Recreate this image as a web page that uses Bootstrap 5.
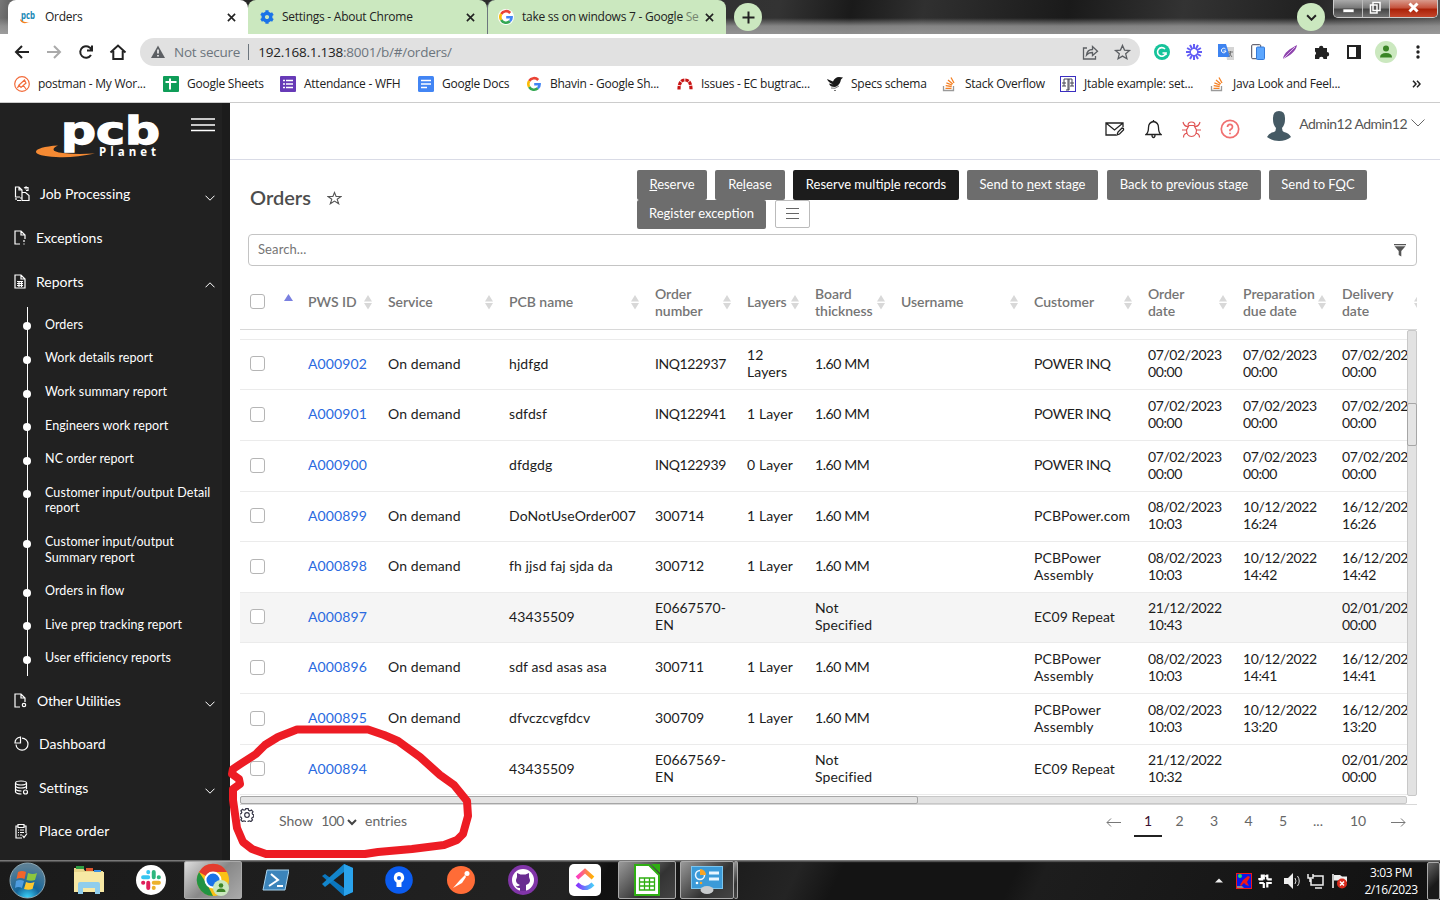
<!DOCTYPE html>
<html lang="en">
<head>
<meta charset="utf-8">
<title>Orders</title>
<link href="https://cdn.jsdelivr.net/npm/bootstrap@5.3.0/dist/css/bootstrap.min.css" rel="stylesheet">
<script src="https://cdn.jsdelivr.net/npm/bootstrap@5.3.0/dist/js/bootstrap.bundle.min.js"></script>
<style>
body{width:1440px;height:900px;overflow:hidden;font-family:Lato,sans-serif;font-size:14px;color:#212121;background:#fff}
svg{display:block;flex:none}
.ui{font-family:"Open Sans",sans-serif;font-size:12px;letter-spacing:-.25px;white-space:nowrap}
/* browser chrome */
.tabstrip{height:34px;background:linear-gradient(100deg,#777 0,#222 50px,#333 54%,#1a1a1a 59%,#303030 64%,#1a1a1a 74%,#333 82%,#222 90%,#555 100%)}
.tabglow{background:linear-gradient(#0000 18px,#999c 26px,#aaac 34px)}
.btab{height:34px;padding:0 12px 0 12px;border-radius:8px 8px 0 0;color:#222}
.green{background:#cbe8bf}
.rnd{width:28px;height:28px;border-radius:50%}
.wctl{width:105px;height:18px;border:1px solid #ccc;border-top:0;border-radius:0 0 5px 5px;background:#555;overflow:hidden;margin-right:2px}
.wctl>div{height:18px;background:linear-gradient(#aaa,#777 45%,#444 50%,#777);border-right:1px solid #bbb}
.wctl>.wx{background:linear-gradient(#d99a8c,#c4503a 45%,#a92108 50%,#c84a30);border:0}
.toolbar{height:36px}
.pill{width:1000px;height:28px;border-radius:14px;background:#e1e1e1;font-size:13.5px;letter-spacing:-.23px}
.tools{display:grid;grid-template-columns:repeat(9,32px);justify-items:center;align-items:center;margin-left:6px}
.marks{height:33px;border-bottom:1px solid #ccc;padding:0 0 5px 14px;display:grid;grid-template-columns:149px 117px 138px 108px 151px 150px 114px 119px 149px 1fr 28px;align-items:center}
.marks>div{display:flex;gap:8px;align-items:center}
/* sidebar */
.side{width:230px;background:#212121;border-right:8px solid #1c1c1c;color:#fff;overflow:hidden}
.brandrow{height:69.5px;padding:9px 6px 0 36px}
.mi{height:43.8px;padding:0 7px 1px 14px;letter-spacing:-.02px;white-space:nowrap}
.mi .chev{margin-top:8px}
.sub~.mi{height:43.6px}
.sub{margin:3px 0 3px 27px;border-left:1px solid #fff;font-size:12.5px;letter-spacing:.09px;line-height:15.6px;height:369px}
.sub div{padding:10px 0 8px 17px;position:relative}
.sub div::before{content:"";position:absolute;left:-5px;top:15.5px;width:8px;height:8px;border-radius:50%;background:#fff}
/* page */
.tophead{height:57px;border-bottom:1px solid #d9dbe6}
.adm{letter-spacing:-.5px;margin-top:10px;color:#555}
.ttl{font-size:20px;font-weight:600;color:#4d4d4d}
.acts{width:780px;column-gap:8px;row-gap:0}
.acts .btn{height:29.5px;padding:0 4px 1px;font-size:13px;line-height:27px;border:0;border-radius:2px;background:#6d6d6d;color:#fff;white-space:nowrap}
.acts .btn.dark{background:#1c1c1c}
.acts .menu{background:#fff;border:1px solid #bbb;width:35px;height:28px;margin:0 0 0 1px}
.b70{width:70px}.b166{width:166px}.b131{width:131px}.b154{width:154px;margin-left:1px}.b98{width:98px}.b129{width:129px}
.srch{height:32px;border:1px solid #c4c4c4;border-radius:4px;font-size:13px;letter-spacing:.1px;color:#757575;padding:0 10px 0 9px}
.grid{table-layout:fixed;width:1190px;border-collapse:separate;border-spacing:0;line-height:17px;margin:0}
.grid td,.grid th{padding:0 0 0 8px;vertical-align:middle}
.grid td{border-bottom:1px solid #ebebeb;height:51px;padding-bottom:3px;letter-spacing:.1px;color:#1c1c1c}
.grid .num{letter-spacing:-.4px}
.grid tbody tr:nth-child(1) td,.grid tbody tr:nth-child(4) td,.grid tbody tr:nth-child(6) td,.grid tbody tr:nth-child(9) td{height:50px}
.grid th{height:64px;border-bottom:1px solid #d8d8d8;color:#757575;font-weight:600;letter-spacing:-.04px}
.grid tr.on td{background:#f5f5f5}
.grid a{color:#2a6ae0;text-decoration:none}
.cb{width:15px;height:15px;border:1px solid #b5b5b5;border-radius:3px;background:#fff;margin-left:2px}
td .cb{margin-top:1px}
.track{background:#e2e2e2;border:1px solid #c8c8c8;border-radius:2px}
.thumb{border:1px solid #a6a6a6;border-radius:2px;background:#e4e4e4}
.vtrack{width:10px;height:466px;padding-top:72px}
.vtrack .thumb{height:43px;margin:0 -1px}
.htrack{width:1167px;height:8px}
.htrack .thumb{height:8px;width:678px;margin:-1px}
.foot{border-top:1px solid #d8d8d8;height:56px;color:#666}
.foot>span{margin-top:5px}
.pg{display:grid;grid-template-columns:28px 28px 35px 34px 35px 34px 36px 44px 36px;text-align:center;padding-top:7px;width:310px;margin-right:1px}
.pg span{height:25px;line-height:17px}
.pg .cur{border-bottom:2px solid #212121;color:#3a1030}
/* taskbar */
.task{height:40px;background:linear-gradient(#777 1px,#2a2a2a 2px,#0000 3px),linear-gradient(115deg,#1a1a1a 0,#222 40%,#101010 42%,#242424 55%,#141414 58%,#141414 70%,#1d1d1d 72%,#111);color:#fff}
.task>.t{width:62px;display:flex;justify-content:center}
.tbox{height:38px;border:1px solid #aaa;border-radius:2px;background:linear-gradient(135deg,#999,#333 60%,#444);display:flex;align-items:center;justify-content:center}
.scrib{position:absolute;left:0;top:700px;pointer-events:none}
</style>
</head>
<body class="d-flex flex-column">
<svg width="0" height="0" class="position-absolute">
<symbol id="g" viewBox="0 0 16 16"><g fill="none" stroke-width="2.6"><path d="M12.2 4A5.6 5.6 0 0 0 3.2 5" stroke="#ea4335"/><path d="M3.2 5a5.8 5.8 0 0 0 0 6" stroke="#fbbc05"/><path d="M3.2 11a5.6 5.6 0 0 0 8.6 1.3" stroke="#34a853"/><path d="M11.8 12.3A5.4 5.4 0 0 0 13.6 8.2H8.2" stroke="#4285f4"/></g></symbol>
<symbol id="x" viewBox="0 0 10 10"><path d="M1 1l8 8M9 1L1 9" stroke="#222" stroke-width="1.8"/></symbol>
<symbol id="dn" viewBox="0 0 10 6"><path d="M.5.7L5 5.2 9.5.7" fill="none" stroke="currentColor"/></symbol>
<symbol id="so" viewBox="0 0 16 16"><path d="M2.5 10v4.5h10V10" fill="none" stroke="#9a9a9a" stroke-width="1.3"/><path d="M4.5 12.3h6M4.7 9.7l6 .8M5.4 6.8l5.6 2.2M7 4l4.7 4M10 1.5l3 5.5" stroke="#f48024" stroke-width="1.3"/></symbol>
<symbol id="slack" viewBox="0 0 20 20"><g stroke-width="3.6" stroke-linecap="round"><path d="M7.5 2.8v.2M2.8 7.5h4.700" stroke="#36c5f0"/><path d="M12.5 2.8v4.7M17 7.500h.2" stroke="#2eb67d"/><path d="M2.8 12.5h.2M7.5 12.5v4.7" stroke="#e01e5a"/><path d="M12.5 12.5h4.7M12.5 17v.2" stroke="#ecb22e"/></g></symbol>
</svg>

<div class="tabstrip"><div class="tabglow d-flex h-100 ps-2">
 <div class="btab ui bg-white d-flex align-items-center" style="width:240px"><svg width="17" height="18"><text x="1" y="11" font-family="Open Sans" font-weight="700" font-size="10" textLength="14" lengthAdjust="spacingAndGlyphs" fill="#1787b5" letter-spacing="0">pcb</text><path d="M0 12q2 5 10 2q-7 1-9-3z" fill="#f58220"/></svg><span class="ms-2 flex-grow-1" style="margin-left:7px">Orders</span><svg width="9" height="9"><use href="#x"/></svg></div>
 <div class="btab ui green d-flex align-items-center" style="width:239px"><svg width="14" height="14" viewBox="-7 -7 14 14"><circle r="3.8" fill="none" stroke="#1a73e8" stroke-width="3.4"/><path d="M0-6.8V-4M0 6.8V4M-5.9-3.4L-3.5-2M5.9 3.4L3.5 2M-5.900 3.4L-3.5 2M5.9-3.4L3.5-2" stroke="#1a73e8" stroke-width="3.2"/></svg><span class="ms-2 flex-grow-1">Settings - About Chrome</span><svg width="9" height="9"><use href="#x"/></svg></div>
 <div class="btab ui green d-flex align-items-center border-start border-secondary" style="width:239px;padding-left:10px"><span class="bg-white rounded-circle"><svg width="16" height="16"><use href="#g"/></svg></span><span class="ms-2 flex-grow-1">take ss on windows 7 - Google <span class="opacity-50">Se</span></span><svg width="9" height="9"><use href="#x"/></svg></div>
 <div class="rnd green ms-2 d-flex align-items-center justify-content-center" style="margin-top:3px"><svg width="13" height="13"><path d="M6.5.5v12M.5 6.5h12" stroke="#222" stroke-width="2"/></svg></div>
 <div class="rnd green ms-auto d-flex align-items-center justify-content-center" style="margin-top:3px"><svg width="11" height="7" viewBox="0 0 10 6"><path d="M1 1l4 4 4-4" fill="none" stroke="#222" stroke-width="1.8"/></svg></div>
 <div class="wctl d-flex ms-2"><div style="width:29px"><svg width="28" height="17"><rect x="9" y="9" width="11" height="3.5" fill="#fff" stroke="#555" stroke-width=".7"/></svg></div><div style="width:27px"><svg width="26" height="17"><path d="M10 2.5h7v8h-7zM7.5 5h6.5v8H7.5z" fill="#555" stroke="#fff" stroke-width="1.5"/></svg></div><div class="wx flex-grow-1"><svg width="47" height="17"><path d="M19.5 3.500l8 8M27.5 3.5l-8 8" stroke="#fff" stroke-width="3"/></svg></div></div>
</div></div>

<div class="toolbar d-flex align-items-center flex-shrink-0">
 <svg width="140" height="28" fill="none" stroke="#222" stroke-width="2"><path d="M29 14H16M22 8l-6 6 6 6"/><path d="M47 14h13M54 8l6 6-6 6" stroke="#aaa"/><path d="M91.5 12A5.8 5.8 0 1 0 91 17M92 7.5v5h-5"/><path d="M110.500 14.5L118 7.5l7.5 7M113.3 13v8h9.4v-8"/></svg>
 <div class="pill ui d-flex align-items-center px-2"><svg width="20" height="16"><path d="M10 1.5L17 14H3z" fill="#5c5f63"/><path d="M10 5.5v4M10 11v1.500" stroke="#fff" stroke-width="1.5"/></svg><span class="text-secondary" style="margin-left:6px">Not secure</span><span class="border-start border-secondary" style="height:16px;margin:0 9px 0 8px"></span><span>192.168.1.138<span class="text-secondary">:8001/b/#/orders/</span></span>
 <svg class="ms-auto" width="50" height="18" fill="none" stroke="#5c5f63" stroke-width="1.3"><path d="M5 5H1.5v11h12v-3M4.500 12c.5-4 3.5-5.5 6-5.5V3.5l5 4.7-5 4.3V9.500c-2.5 0-4.5.5-6 2.500z"/><path d="M40.500 2.500l2 4.600 5 .4-3.800 3.300 1.200 4.900-4.400-2.600-4.400 2.600 1.200-4.900-3.800-3.300 5-.4z"/></svg></div>
 <div class="tools">
 <svg width="16" height="16"><circle cx="8" cy="8" r="8" fill="#15c39a"/><path d="M11 5a4.300 4.300 0 1 0 1 4H8.500M12 11V9" fill="none" stroke="#fff" stroke-width="1.600"/></svg>
 <svg width="16" height="16" viewBox="-8 -8 16 16" stroke="#625df5" stroke-width="2"><path d="M0-8v5M0 8V3M-8 0h5M8 0H3M-4-6.900l2.500 4.300M4 6.900L1.500 2.600M4-6.900L1.500-2.600M-4 6.900l2.500-4.300M-6.900-4l4.300 2.500M6.900 4L2.600 1.500M6.900-4L2.600-1.500M-6.900 4l4.300-2.500"/></svg>
 <svg width="16" height="16"><path d="M7 3h9v13H9z" fill="#d5d5d5"/><path d="M0 0h8l4 13H0z" fill="#3d83f0"/><path d="M7.500 5a2.300 2.300 0 1 0 .5 2H5.500" fill="none" stroke="#fff"/><path d="M10 8h5M12.500 7v2c0 2-1 3-2 4M11 9l3 4" stroke="#777" fill="none"/></svg>
 <svg width="14" height="16"><rect x=".7" y=".7" width="9" height="14" rx="1" fill="#fff" stroke="#445"/><rect x="5.500" y="3" width="8" height="12.500" rx="1" fill="#5ca7ff" stroke="#347bdb"/></svg>
 <svg width="16" height="16"><path d="M1 15C2 8 8 5 15 1c-1 6-6 10-14 14z" fill="#8e44ad"/><path d="M1 15L13 3" stroke="#d9b3ea"/></svg>
 <svg width="16" height="16"><path d="M1 4h4a2.200 2.200 0 1 1 4.400 0H13v4a2.200 2.200 0 1 1 0 4.400V15H9.500a2.200 2.200 0 0 0-4.400 0H1v-4a2 2 0 0 0 0-3.500z" fill="#222"/></svg>
 <svg width="14" height="14"><path d="M1 1h12v12H1z" fill="#fff" stroke="#222" stroke-width="2"/><path d="M9 1h4v12H9z" fill="#222"/></svg>
 <svg width="22" height="22"><circle cx="11" cy="11" r="11" fill="#cbe8bf"/><circle cx="11" cy="7.500" r="3" fill="#3b8527"/><path d="M5 16.500q0-4.500 6-4.500t6 4.500z" fill="#3b8527"/></svg>
 <svg width="4" height="14" fill="#222"><circle cx="2" cy="2" r="1.700"/><circle cx="2" cy="7" r="1.700"/><circle cx="2" cy="12" r="1.700"/></svg>
 </div>
</div>
<div class="marks ui flex-shrink-0">
 <div><svg width="16" height="16" fill="none" stroke="#f26b3a" stroke-width="1.200"><circle cx="8" cy="8" r="7.300"/><path d="M10.500 4L5 9l2 2.500 5-4.500zM9 9l3 4M5 9l-1.500 3"/></svg>postman - My Wor...</div>
 <div><svg width="16" height="16"><rect width="16" height="16" rx="1" fill="#0f9d58"/><path d="M2.500 6h11M7 2.500v11" stroke="#fff" stroke-width="2"/></svg>Google Sheets</div>
 <div><svg width="16" height="16"><rect width="16" height="16" rx="1" fill="#673ab7"/><path d="M3 4.500h2M6 4.500h7M3 8h2M6 8h7M3 11.500h2M6 11.500h7" stroke="#fff" stroke-width="1.700"/></svg>Attendance - WFH</div>
 <div><svg width="16" height="16"><rect width="16" height="16" rx="1.500" fill="#4285f4"/><path d="M3 4.500h10M3 8h10M3 11.500h6" stroke="#fff" stroke-width="1.700"/></svg>Google Docs</div>
 <div><svg width="16" height="16"><use href="#g"/></svg>Bhavin - Google Sh...</div>
 <div><svg width="16" height="16"><path d="M2 13.500q0-9.500 6-9.500t6 9.500" fill="none" stroke="#c81414" stroke-width="3.200" stroke-dasharray="3.500 .8"/></svg>Issues - EC bugtrac...</div>
 <div><svg width="16" height="16"><path d="M0 3l6 2.500Q8 1 12 1l4 .5-2 2q-1 6-6 7.500-5 0-6-3.500l4 1Q1 6 0 3z" fill="#181818"/><path d="M4 12q4 1.500 8-2M7 14.500h2" stroke="#777" fill="none"/></svg>Specs schema</div>
 <div><svg width="16" height="16"><use href="#so"/></svg>Stack Overflow</div>
 <div><svg width="16" height="16" fill="none" stroke="#1b1b6b"><rect x=".5" y=".5" width="15" height="15" stroke="#3a2ec0"/><path d="M4 3h8M8 3v11M9 3v11M4 3v7M12 3v7M2 7h4M10 7h4M2 10h4M10 10h4M6 14h3" stroke="#445"/></svg>Jtable example: set...</div>
 <div><svg width="16" height="16"><use href="#so"/></svg>Java Look and Feel...</div>
 <svg width="9" height="8" fill="none" stroke="#222" stroke-width="1.500"><path d="M1 .7L4 4 1 7.300M5 .7L8 4 5 7.300"/></svg>
</div>

<div class="d-flex flex-grow-1 overflow-hidden">
 <nav class="side flex-shrink-0">
  <div class="brandrow d-flex">
   <svg width="126" height="48"><text x="25" y="31.500" fill="#fff" stroke="#fff" stroke-width="1.300" font-family="DejaVu Sans" font-weight="700" font-size="37" textLength="99" lengthAdjust="spacingAndGlyphs">pcb</text><path d="M22 33.500C-6 35-8 44 20 45q18 1 39-3.500-20 1-32-.5-16-2-5-7.500z" fill="#f58a33"/><text x="63" y="43.500" fill="#fff" font-family="Open Sans" font-weight="700" font-size="11.500" textLength="57">Planet</text></svg>
   <svg class="ms-auto" style="margin-top:6px;margin-right:1px" width="24" height="14"><path d="M0 1h24M0 7h24M0 12.500h24" stroke="#fff" stroke-width="1.500"/></svg>
  </div>
  <div class="mi d-flex align-items-center"><svg width="16" height="16" fill="none" stroke="#fff" stroke-width="1.200"><path d="M6 11H1.500V1H5l3 3v8H6M5 1v3h3M8 6.500h3.500L15 9.500v5H8V6.500M3 14.500h4M2 12v2M10 2l2-1v2.500M11 1.500h3v3h-2"/></svg><span style="margin-left:10px">Job Processing</span><svg class="chev ms-auto" width="10" height="6"><use href="#dn"/></svg></div>
  <div class="mi d-flex align-items-center"><svg width="12" height="15" fill="none" stroke="#fff" stroke-width="1.200"><path d="M6 14H1V1h6l4 4v4M7 1v4h4M10 10v2M10 13.500v1"/></svg><span style="margin-left:10px">Exceptions</span></div>
  <div class="mi d-flex align-items-center"><svg width="12" height="15" fill="none" stroke="#fff" stroke-width="1.200"><path d="M1 1h6l4 4v9H1zM7 1v4h4M3 7.500h6M3 9.500h6M3 11.500h6M5 7v6M7.500 7v6"/></svg><span style="margin-left:10px">Reports</span><svg class="chev ms-auto" width="10" height="6"><path d="M.5 5.300L5 .8l4.500 4.500" fill="none" stroke="#fff"/></svg></div>
  <div class="sub"><div>Orders</div><div>Work details report</div><div>Work summary report</div><div>Engineers work report</div><div>NC order report</div><div>Customer input/output Detail report</div><div>Customer input/output<br>Summary report</div><div>Orders in flow</div><div>Live prep tracking report</div><div>User efficiency reports</div></div>
  <div class="mi d-flex align-items-center"><svg width="13" height="15" fill="none" stroke="#fff" stroke-width="1.200"><path d="M6 14H1V1h6l4 4v4M7 1v4h4"/><circle cx="10" cy="12" r="1.700"/></svg><span style="margin-left:10px;letter-spacing:-.22px">Other Utilities</span><svg class="chev ms-auto" width="10" height="6"><use href="#dn"/></svg></div>
  <div class="mi d-flex align-items-center"><svg width="15" height="15" fill="none" stroke="#fff" stroke-width="1.200"><path d="M8 2.200A6 6 0 1 1 2 8.500M6.500 1v6H1Q1 2 6.500 1z"/></svg><span style="margin-left:10px">Dashboard</span></div>
  <div class="mi d-flex align-items-center"><svg width="15" height="15" fill="none" stroke="#fff" stroke-width="1.200"><ellipse cx="7" cy="3" rx="5.500" ry="2"/><path d="M1.500 3v9q1 2 6 2M12.500 3v6M1.500 6q1 2 5.500 2t5.500-2M1.500 9q1 2 6 2"/><circle cx="11.500" cy="12" r="2"/></svg><span style="margin-left:10px">Settings</span><svg class="chev ms-auto" width="10" height="6"><use href="#dn"/></svg></div>
  <div class="mi d-flex align-items-center"><svg width="15" height="16" fill="none" stroke="#fff" stroke-width="1.200"><path d="M4 3H2v12h6M10 3h2v7M4 1.500h6v3H4zM4 7h1M6 7h4M4 9.500h1M6 9.500h4M4 12h1M6 12h2M8.500 12.500l1.500 2 3-4"/></svg><span style="margin-left:10px;letter-spacing:.1px">Place order</span></div>
 </nav>

 <main class="flex-grow-1 d-flex flex-column overflow-hidden">
  <header class="tophead d-flex align-items-start flex-shrink-0 justify-content-end">
   <svg style="margin-top:17px;margin-right:20px" width="20" height="18" fill="none" stroke="#222" stroke-width="1.300"><path d="M11 15H1V3h17v4M1 3l8.500 7L18 3"/><path d="M12 15l1-3 4-4q2 0 1.500 2l-4 4z"/></svg>
   <svg style="margin-top:16px;margin-right:20px" width="17" height="20" fill="none" stroke="#222" stroke-width="1.300"><path d="M1 15.500q2.500-2 2.500-7 0-5 5-6 5 1 5 6 0 5 2.500 7zM7 16q0 2.500 1.500 2.500T10 16M8.500 1v1.500"/></svg>
   <svg style="margin-top:16px;margin-right:19px" width="19" height="20" fill="none" stroke="#e05555" stroke-width="1.200"><path d="M9.500 17.500C6 17.500 4.500 14 4.500 11L7 6.500h5l2.500 4.500c0 3-1.500 6.500-5 6.500zM6 6.500q0-3.500 3.500-3.500T13 6.500M1 3q1 4.500 5 4.500M18 3q-1 4.500-5 4.500M0 11h4.500M19 11h-4.500M1.500 18.500q0-4 4-4.500M17.500 18.500q0-4-4-4.500"/></svg>
   <svg style="margin-top:16px;margin-right:27px" width="20" height="20" fill="none" stroke="#f07070" stroke-width="1.700"><circle cx="10" cy="10" r="8.700"/><path d="M7.500 8q0-2.700 2.500-2.700T12.500 8q0 1.500-2.500 3v1.300M10 13.700v1.500"/></svg>
   <svg style="margin-top:8px;margin-right:8px" width="24" height="30" fill="#455a64"><path d="M12 0q6.500 0 6 8.500Q18 14 15 17q0 3 2 4 5 1 7 5-5 4-12 4T0 26q2-4 7-5 2-1 2-4-3-3-3-8.500Q5.500 0 12 0z"/></svg>
   <span class="adm">Admin12 Admin12</span>
   <svg class="ms-1" style="margin:16px 15px 0 0" width="14" height="8"><path d="M.5.500L7 7 13.500.500" fill="none" stroke="#666"/></svg>
  </header>

  <div class="d-flex flex-shrink-0" style="height:74px;padding:10px 23px 0 20px">
   <span class="ttl" style="padding-top:12px">Orders</span>
   <svg style="margin:21px 0 0 16px" width="15" height="14" fill="none" stroke="#555" stroke-width="1.100"><path d="M7.500 1.500l1.600 4H14l-3.800 2.800 1.500 4.500-4.200-2.700-4.200 2.700 1.500-4.500L1 5.500h4.900z"/></svg>
   <div class="acts d-flex flex-wrap ms-auto align-content-start">
    <button class="btn b70"><u>R</u>eserve</button><button class="btn b70">Re<u>l</u>ease</button><button class="btn dark b166">Reserve multip<u>l</u>e records</button><button class="btn b131">Send to <u>n</u>ext stage</button><button class="btn b154">Back to <u>p</u>revious stage</button><button class="btn b98">Send to F<u>Q</u>C</button><button class="btn b129">Re<u>g</u>ister exception</button><button class="btn menu"><svg width="13" height="12" class="mx-auto"><path d="M0 1.500h13M0 6.500h13M0 11.500h13" stroke="#666"/></svg></button>
   </div>
  </div>
  <div class="srch d-flex align-items-center justify-content-between flex-shrink-0" style="margin:0 23px 0 18px"><span>Search...</span><svg width="12" height="13" fill="#555"><path d="M0 0h12v1.200H0zM.5 2.200h11L7.300 7v5.500L4.700 11V7z"/></svg></div>

  <div class="overflow-hidden flex-shrink-0" style="margin:0 23px 0 10px">
   <table class="grid" id="head"></table>
   <div class="d-flex"><div class="overflow-hidden" style="width:1167px;height:466px"><table class="grid" id="rows"></table></div><div class="track vtrack"><div class="thumb"></div></div></div>
   <div class="track htrack"><div class="thumb"></div></div>
   <div class="foot d-flex">
    <svg style="margin-top:3px" width="14" height="14" viewBox="-7 -7 14 14" fill="none" stroke="#334" stroke-width="1.200"><circle r="2.300"/><path d="M-1.200-6.300h2.400l.4 1.600 1.300.6 1.500-.9 1.600 1.700-.9 1.400.5 1.300 1.100.4v2.200l-1.500.4-.5 1.200.8 1.400-1.600 1.600-1.500-.8-1.200.5-.4 1.300h-2.200l-.4-1.300-1.300-.5-1.400.8-1.600-1.600.8-1.400-.5-1.300-1.500-.4V-1l1.500-.4.6-1.300-.9-1.400 1.600-1.600 1.500.9 1.200-.5z"/></svg>
    <span style="margin-left:25px">Show</span><span style="margin-left:8px;letter-spacing:-.5px">100</span><svg style="margin:14px 0 0 3px" width="10" height="7"><path d="M1 1l4 4 4-4" fill="none" stroke="#444" stroke-width="2"/></svg><span style="margin-left:8px">entries</span>
    <div class="pg ms-auto"><svg width="15" height="10" style="margin-top:5px" fill="none" stroke="#777"><path d="M15 5.500H1M5 1.500l-4 4 4 4"/></svg><span class="cur">1</span><span>2</span><span>3</span><span>4</span><span>5</span><span>...</span><span>10</span><svg width="15" height="10" style="margin:5px 0 0 11px" fill="none" stroke="#777"><path d="M0 5.500h14M10 1.500l4 4-4 4"/></svg></div>
   </div>
  </div>
 </main>
</div>

<div class="task d-flex align-items-center flex-shrink-0">
 <div style="width:58px;padding-left:9px"><svg width="37" height="37"><defs><radialGradient id="orb" cx=".5" cy="1" r=".9"><stop offset="0" stop-color="#3cd8ff"/><stop offset=".4" stop-color="#14659a"/><stop offset="1" stop-color="#5a7f96"/></radialGradient></defs><circle cx="18.500" cy="18.500" r="17.500" fill="url(#orb)" stroke="#8fa9b5"/><path d="M9 10q4-2 8 0l-1.500 7q-4-2-8 0z" fill="#f2652a"/><path d="M19 11q5 2 9 0l-2 7q-4 1.500-8.500 0z" fill="#8cc63e"/><path d="M7 19q4-2 8 0l-2 7q-4-2-7 0z" fill="#4f9de0"/><path d="M17 20q4 2 8.500 0l-2 7q-4 1.500-8.500 0z" fill="#fdc82f"/></svg></div>
 <div class="t"><svg width="32" height="30"><path d="M1 3h9l2 3h18v21H1z" fill="#e9d58a"/><path d="M3 1h8v3H3z" fill="#2f9e44"/><path d="M13 3h7v3h-7z" fill="#e0562c"/><path d="M21 5h7v3h-7z" fill="#3d8fe0"/><path d="M1 7h30v20H1z" fill="#f7e8a4"/><path d="M5 29V19q0-2 2-2h18q2 0 2 2v10h-5v-6H10v6z" fill="#8fcdec"/></svg></div>
 <div class="t"><svg width="30" height="30"><circle cx="15" cy="15" r="15" fill="#fff"/><use href="#slack" x="4" y="4" width="22" height="22"/></svg></div>
 <div class="t"><div class="tbox" style="width:58px;background:linear-gradient(135deg,#ddd,#888 50%,#aaa)"><svg width="34" height="34"><circle cx="17" cy="17" r="16" fill="#fbc116"/><path d="M17 17L3 9A16 16 0 0 1 31 9H17z" fill="#e33b2e"/><path d="M3 9l8 12 6 12A16 16 0 0 1 3 9z" fill="#229342"/><circle cx="17" cy="17" r="7.500" fill="#1a73e8" stroke="#fff" stroke-width="2"/><circle cx="25" cy="25" r="8" fill="#cbe8bf"/><circle cx="25" cy="22.500" r="2.300" fill="#3b8527"/><path d="M20.500 29q0-3.500 4.500-3.500t4.500 3.500z" fill="#3b8527"/></svg></div></div>
 <div class="t"><svg width="28" height="24"><path d="M6 2h22l-4 20H2z" fill="#3b84bb" stroke="#a8d2ec"/><path d="M10 6l7 6-9 6M16 18h6" fill="none" stroke="#fff" stroke-width="2"/></svg></div>
 <div class="t"><svg width="32" height="32"><path d="M23 0l9 4v24l-9 4L1 12l3-2 19 14z" fill="#0b76bd"/><path d="M23 0l9 4v24l-9 4z" fill="#2aa3ec"/><path d="M1 20l3 3L23 8V0z" fill="#1386cd"/></svg></div>
 <div class="t"><svg width="28" height="28"><circle cx="14" cy="14" r="13.800" fill="#0b5cf0"/><path d="M14 6a5.700 5.700 0 0 0-2.500 10.500V21h5v-4.500A5.700 5.700 0 0 0 14 6z" fill="#fff"/><circle cx="14" cy="12" r="2" fill="#0b5cf0"/></svg></div>
 <div class="t"><svg width="28" height="28"><circle cx="14" cy="14" r="14" fill="#ff6c37"/><circle cx="20" cy="7.500" r="2.500" fill="#fff"/><path d="M18 9l-5 5-7 8 9-5 4-6z" fill="#fff"/></svg></div>
 <div class="t"><svg width="30" height="30"><circle cx="15" cy="15" r="15" fill="#8135a8"/><circle cx="15" cy="15" r="11" fill="#fff"/><path d="M9 8l3.500 1.500h5L21 8v4q3 6-3 8v6h-6v-3q-3 .5-4.500-2.500Q10 22 12 20q-6-2-3-8z" fill="#6a2c91"/></svg></div>
 <div class="t"><svg width="32" height="32"><defs><linearGradient id="ca"><stop stop-color="#fd38c8"/><stop offset="1" stop-color="#ffb300"/></linearGradient><linearGradient id="cb"><stop stop-color="#8930fd"/><stop offset="1" stop-color="#49ccf9"/></linearGradient></defs><rect width="32" height="32" rx="5" fill="#fff"/><path d="M8 14l8-7 8 7" fill="none" stroke="url(#ca)" stroke-width="4"/><path d="M8 20q8 8 16 0" fill="none" stroke="url(#cb)" stroke-width="4"/></svg></div>
 <div class="t"><div class="tbox" style="width:58px"><svg width="26" height="32"><path d="M1 1h14l10 10v20H1z" fill="#fff" stroke="#2fae12" stroke-width="2"/><path d="M17 0h9v9z" fill="#2fae12"/><path d="M5.500 14h15v12h-15zM5.500 18h15M5.500 22h15M10.500 14v12M15.500 14v12" fill="none" stroke="#2fae12" stroke-width="1.300"/></svg></div></div>
 <div class="d-flex" style="margin-left:2px"><div class="tbox" style="width:54px"><svg width="32" height="28"><rect x=".5" y=".5" width="31" height="22" fill="#3b9ad8" stroke="#7cc6ef"/><circle cx="9" cy="9" r="4.500" fill="none" stroke="#e8f5ff" stroke-width="1.500"/><path d="M9 9V3a6 6 0 0 1 6 6z" fill="#fba524"/><path d="M18 7h10M18 13h10" stroke="#e8f5ff" stroke-width="3"/><circle cx="6" cy="17" r="1.300" fill="#fff"/><circle cx="10" cy="17" r="1.300" fill="#fba524"/><ellipse cx="16" cy="24" rx="6.500" ry="4" fill="#c9ccce"/></svg></div><div class="tbox border-start-0" style="width:4px"></div></div>
 <div class="ms-auto d-flex align-items-center" style="padding-top:2px">
  <svg width="150" height="20"><path d="M1 11.500l4-4 4 4z" fill="#eee"/><rect x="22.500" y="2.500" width="15" height="15" fill="#0a18e8" stroke="#f01818"/><path d="M26 14l3-5 5-4 2 1-3 5 2 4-3-1-2-2-3 3z" fill="#f01818"/><circle cx="26" cy="5" r="2" fill="#22e060"/><path d="M23 15h5l2 2h-7z" fill="#888"/><path d="M45 8h2M48.500 3.500v4.500M52.500 4v0M45.500 8h3M53 4v2M50.500 3.500v5M54.500 5v0M50 8.300h-4.500M46 12h4.500M50.500 12v5M54 3.500v5M54 8.300h4.500M54 16.500V12h4.500" transform="translate(-.7)" stroke="#fff" stroke-width="2.200" fill="none"/><path d="M70 7h4l5-5v16l-5-5h-4z" fill="#eee"/><path d="M81 7q2 3 0 6M83.500 5q3.500 5 0 10" stroke="#ddd" fill="none"/><path d="M99 5h10v9H97V8M94 3v4h5V3M96 7v4M101 17h7" fill="none" stroke="#eee" stroke-width="1.500"/><path d="M119 3v14" stroke="#fff" stroke-width="1.500"/><path d="M120 4h6l2 1.500h5V11h-6l-2-1.500h-5z" fill="#eee"/><circle cx="128" cy="12.500" r="5" fill="#d92a1c"/><path d="M126 10.500l4 4M130 10.500l-4 4" stroke="#fff" stroke-width="1.500"/></svg>
  <div class="ui text-center" style="line-height:17px;width:54px;margin-right:9px;letter-spacing:-.4px">3:03 PM<br>2/16/2023</div>
  <div class="tbox" style="width:13px;background:linear-gradient(135deg,#666,#1a1a1a 60%)"></div>
 </div>
</div>

<svg class="scrib" width="500" height="160" fill="none" stroke="#ed1c24" stroke-width="8" stroke-linejoin="round" stroke-linecap="round"><path d="M233 69L242 63 256 54 265 45 278 37 297 29.500H368L384 35 398 41 420 57 440 75 454 85 467 101 468 116 463 134 457 140 444 145 412 149 378 152 365 154H266L252 149 243 142 237 128 233 100 233 89 240 84 239 79 232 74z"/></svg>
<script>
const cols=[44,16,80,121,146,92,68,86,133,114,95,99,96];
const colgroup='<colgroup>'+cols.map(w=>`<col style="width:${w}px">`).join('')+'</colgroup>';
const names=['PWS ID','Service','PCB name','Order<br>number','Layers','Board<br>thickness','Username','Customer','Order<br>date','Preparation<br>due date','Delivery<br>date'];
const sort='<svg width="8" height="16"><path d="M4 1l4 6.500H0zM4 15.500L0 9h8z" fill="#d8d8d8"/></svg>';
document.getElementById('head').innerHTML=colgroup+'<tr><th class="pt-2"><div class="cb"></div></th><th class="p-0"><svg width="9" height="8"><path d="M4.500 0l4.500 7H0z" fill="#7a80e0"/></svg></th>'+names.map(n=>`<th class="pt-2"><div class="d-flex align-items-center justify-content-between pe-2"><span>${n}</span>${sort}</div></th>`).join('')+'</tr>';
const D='On demand',P='07/02/2023<br>00:00',M='1.60 MM',N='Not<br>Specified',A='PCBPower<br>Assembly';
const rows=[
['A000902',D,'hjdfgd','INQ122937','12<br>Layers',M,'','POWER INQ',P,P,P],
['A000901',D,'sdfdsf','INQ122941','1 Layer',M,'','POWER INQ',P,P,P],
['A000900','','dfdgdg','INQ122939','0 Layer',M,'','POWER INQ',P,P,P],
['A000899',D,'DoNotUseOrder007','300714','1 Layer',M,'','PCBPower.com','08/02/2023<br>10:03','10/12/2022<br>16:24','16/12/2022<br>16:26'],
['A000898',D,'fh jjsd faj sjda da','300712','1 Layer',M,'',A,'08/02/2023<br>10:03','10/12/2022<br>14:42','16/12/2022<br>14:42'],
['A000897','','43435509','E0667570-<br>EN','',N,'','EC09 Repeat','21/12/2022<br>10:43','','02/01/2023<br>00:00'],
['A000896',D,'sdf asd asas asa','300711','1 Layer',M,'',A,'08/02/2023<br>10:03','10/12/2022<br>14:41','16/12/2022<br>14:41'],
['A000895',D,'dfvczcvgfdcv','300709','1 Layer',M,'',A,'08/02/2023<br>10:03','10/12/2022<br>13:20','16/12/2022<br>13:20'],
['A000894','','43435509','E0667569-<br>EN','',N,'','EC09 Repeat','21/12/2022<br>10:32','','02/01/2023<br>00:00']];
const tight=(c,j)=>j>7||c.startsWith('INQ')||c=='POWER INQ'||c==M;
document.getElementById('rows').innerHTML=colgroup+'<thead><tr><td colspan="13" style="height:10px;padding:0"></td></tr></thead><tbody>'+rows.map((r,i)=>`<tr${i==5?' class="on"':''}><td><div class="cb"></div></td><td></td>`+r.map((c,j)=>`<td${tight(c,j)?' class="num"':''}>${j?c:`<a href="#">${c}</a>`}</td>`).join('')+'</tr>').join('')+'</tbody>';
</script>
</body>
</html>
